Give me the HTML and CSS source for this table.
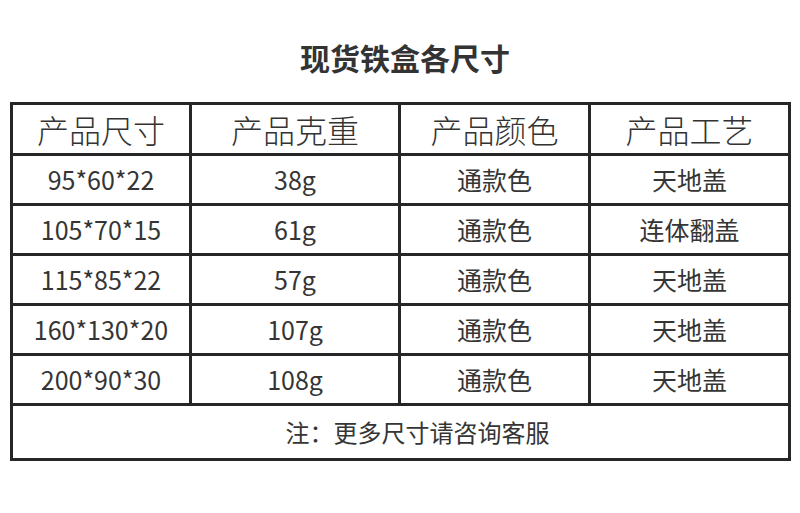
FILE: index.html
```html
<!DOCTYPE html>
<html lang="zh-CN">
<head>
<meta charset="utf-8">
<title>现货铁盒各尺寸</title>
<link rel="stylesheet" href="styles.css">
</head>
<body>
<div class="page">
  <h1 class="title">现货铁盒各尺寸</h1>
  <div class="sheet">
    <div class="cell head">产品尺寸</div>
    <div class="cell head">产品克重</div>
    <div class="cell head">产品颜色</div>
    <div class="cell head">产品工艺</div>

    <div class="cell">95*60*22</div>
    <div class="cell">38g</div>
    <div class="cell">通款色</div>
    <div class="cell">天地盖</div>

    <div class="cell">105*70*15</div>
    <div class="cell">61g</div>
    <div class="cell">通款色</div>
    <div class="cell">连体翻盖</div>

    <div class="cell">115*85*22</div>
    <div class="cell">57g</div>
    <div class="cell">通款色</div>
    <div class="cell">天地盖</div>

    <div class="cell">160*130*20</div>
    <div class="cell">107g</div>
    <div class="cell">通款色</div>
    <div class="cell">天地盖</div>

    <div class="cell">200*90*30</div>
    <div class="cell">108g</div>
    <div class="cell">通款色</div>
    <div class="cell">天地盖</div>

    <div class="cell note">注：更多尺寸请咨询客服</div>
  </div>
</div>
</body>
</html>
```

FILE: styles.css
```css
html, body {
  margin: 0;
  padding: 0;
  background: #ffffff;
}

.page {
  width: 800px;
  height: 513px;
  font-family: "Noto Sans CJK SC", "Noto Sans", sans-serif;
  color: #333333;
}

.title {
  margin: 0;
  padding-top: 42px;
  height: 30px;
  line-height: 30px;
  font-size: 30px;
  font-weight: 700;
  text-align: center;
  padding-left: 10px;
  color: #333333;
}

.sheet {
  margin: 30px 0 0 10px;
  width: 781px;
  box-sizing: border-box;
  display: grid;
  grid-template-columns: 176px 206px 187px 197px;
  grid-template-rows: 48px repeat(5, 47px) 52px;
  gap: 3px;
  padding: 3px;
  background: #262626;
}

.cell {
  background: #ffffff;
  display: flex;
  align-items: center;
  justify-content: center;
  font-size: 25px;
  font-weight: 400;
  line-height: 1;
  color: #353535;
}

.head {
  font-size: 32px;
  font-weight: 300;
  color: #333333;
}

.note {
  grid-column: 1 / -1;
  font-size: 24px;
  font-weight: 400;
  padding-left: 34px;
}
```
